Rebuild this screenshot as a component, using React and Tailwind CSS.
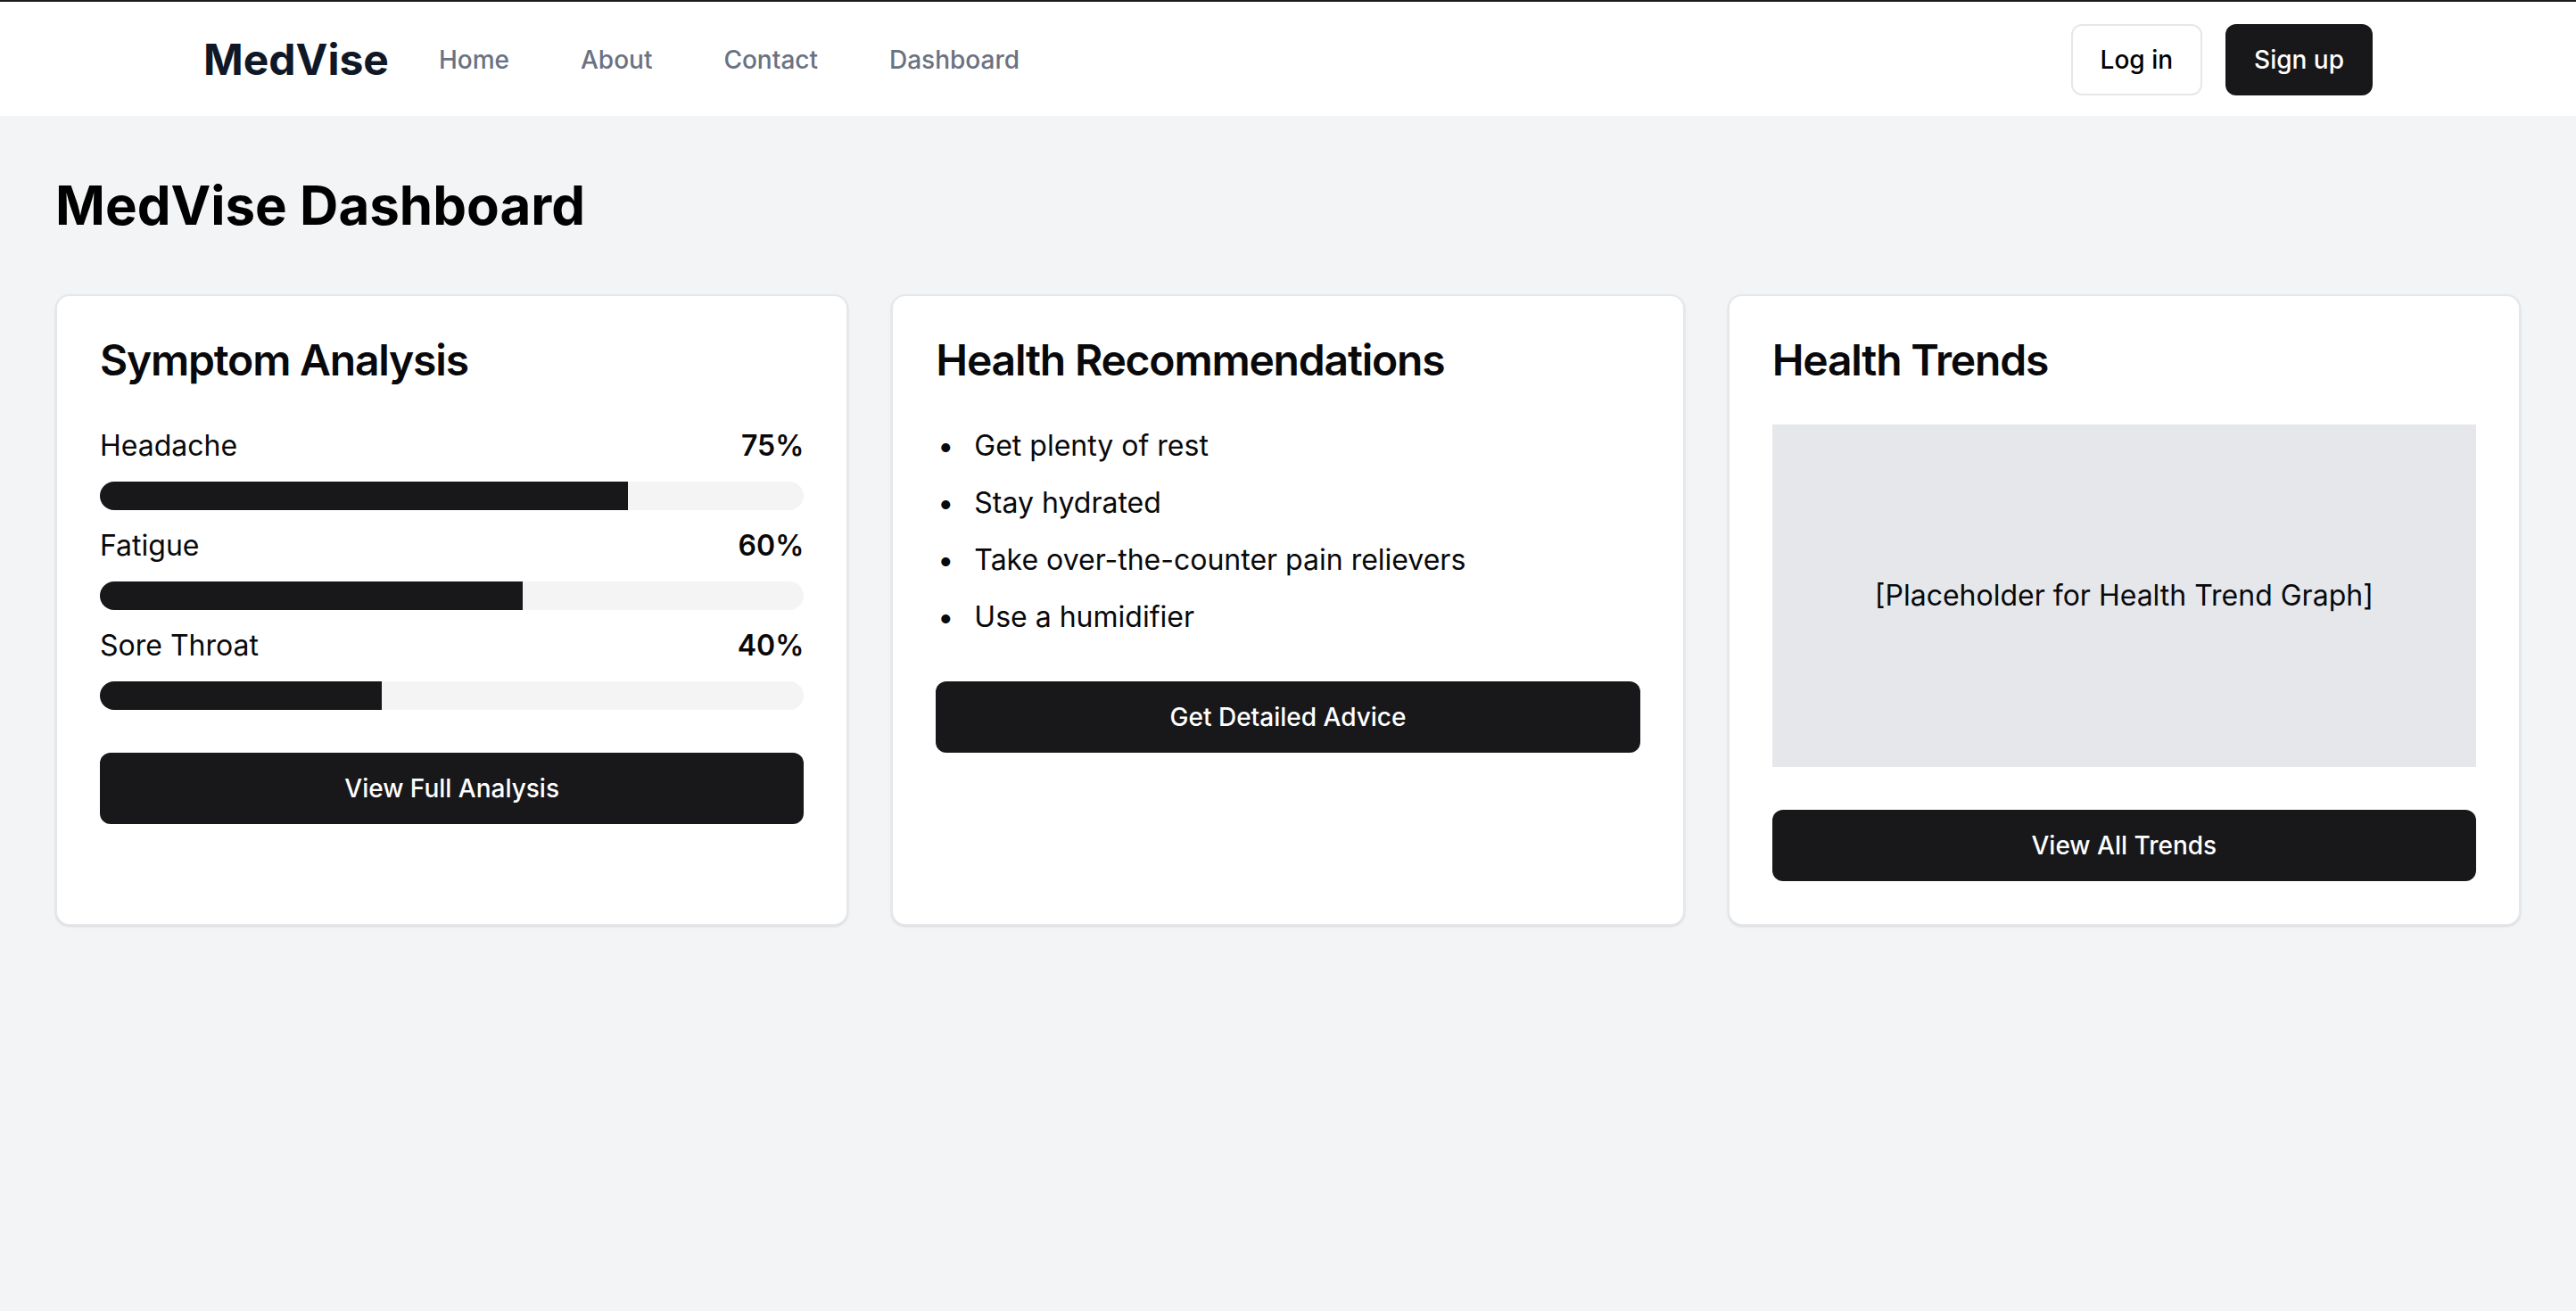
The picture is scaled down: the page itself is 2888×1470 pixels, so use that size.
import React from 'react';

const symptoms = [
    { name: 'Headache', value: 75 },
    { name: 'Fatigue', value: 60 },
    { name: 'Sore Throat', value: 40 },
];

const tips = [
    'Get plenty of rest',
    'Stay hydrated',
    'Take over-the-counter pain relievers',
    'Use a humidifier',
];

function Card({ title, children }) {
    return (
        <div className="bg-white border-2 border-gray-200 rounded-[16px] shadow-sm text-[#09090b]">
            <div className="p-[48px]">
                <h3 className="text-[48px] font-semibold leading-none tracking-tight">{title}</h3>
            </div>
            <div className="px-[48px] pb-[48px]">{children}</div>
        </div>
    );
}

function DarkButton({ children }) {
    return (
        <button className="w-full h-[80px] mt-[48px] rounded-[12px] bg-[#18181b] text-white text-[28px] font-medium">
            {children}
        </button>
    );
}

export default function App() {
    return (
        <div className="min-h-screen bg-gray-100" style={{ fontFamily: 'Inter, "Noto Sans", sans-serif' }}>
            {/* 상단 네비게이션 */}
            <header className="bg-white border-t-2 border-[#1c1c1c] h-[130px]">
                <div className="max-w-[2560px] mx-auto px-[64px] h-full flex items-center justify-between pt-[2px]">
                    <div className="flex items-center">
                        <span className="text-[48px] font-bold text-gray-900 leading-none">MedVise</span>
                        <nav className="ml-[56px] flex gap-[80px] text-[28px] font-medium text-gray-500">
                            <a href="#">Home</a>
                            <a href="#">About</a>
                            <a href="#">Contact</a>
                            <a href="#">Dashboard</a>
                        </nav>
                    </div>
                    <div className="flex items-center gap-[26px]">
                        <button className="h-[80px] px-[31px] rounded-[12px] border-2 border-gray-200 bg-white text-[28px] font-medium text-black">
                            Log in
                        </button>
                        <button className="h-[80px] px-[32px] rounded-[12px] bg-[#18181b] text-[28px] font-medium text-white">
                            Sign up
                        </button>
                    </div>
                </div>
            </header>

            {/* 대시보드 본문 */}
            <main className="px-[62px] py-[64px]">
                <h1 className="text-[60px] leading-[72px] font-bold text-black mb-[64px]">MedVise Dashboard</h1>
                <div className="grid grid-cols-3 gap-[48px]">
                    <Card title="Symptom Analysis">
                        <div className="space-y-[16px]">
                            {symptoms.map((s) => (
                                <div key={s.name}>
                                    <div className="flex justify-between items-center mb-[16px] text-[32px] leading-[48px]">
                                        <span>{s.name}</span>
                                        <span className="font-semibold">{s.value}%</span>
                                    </div>
                                    <div className="h-[32px] w-full rounded-full bg-[#f4f4f5] overflow-hidden">
                                        <div className="h-full bg-[#18181b]" style={{ width: `${s.value}%` }} />
                                    </div>
                                </div>
                            ))}
                        </div>
                        <DarkButton>View Full Analysis</DarkButton>
                    </Card>

                    <Card title="Health Recommendations">
                        <ul className="space-y-[16px] text-[32px] leading-[48px]">
                            {tips.map((t) => (
                                <li key={t} className="flex">
                                    <span className="w-[43px] shrink-0 pl-[2px]">•</span>
                                    <span>{t}</span>
                                </li>
                            ))}
                        </ul>
                        <DarkButton>Get Detailed Advice</DarkButton>
                    </Card>

                    <Card title="Health Trends">
                        <div className="h-[384px] bg-gray-200 flex items-center justify-center text-[32px] leading-[48px]">
                            [Placeholder for Health Trend Graph]
                        </div>
                        <DarkButton>View All Trends</DarkButton>
                    </Card>
                </div>
            </main>
        </div>
    );
}
